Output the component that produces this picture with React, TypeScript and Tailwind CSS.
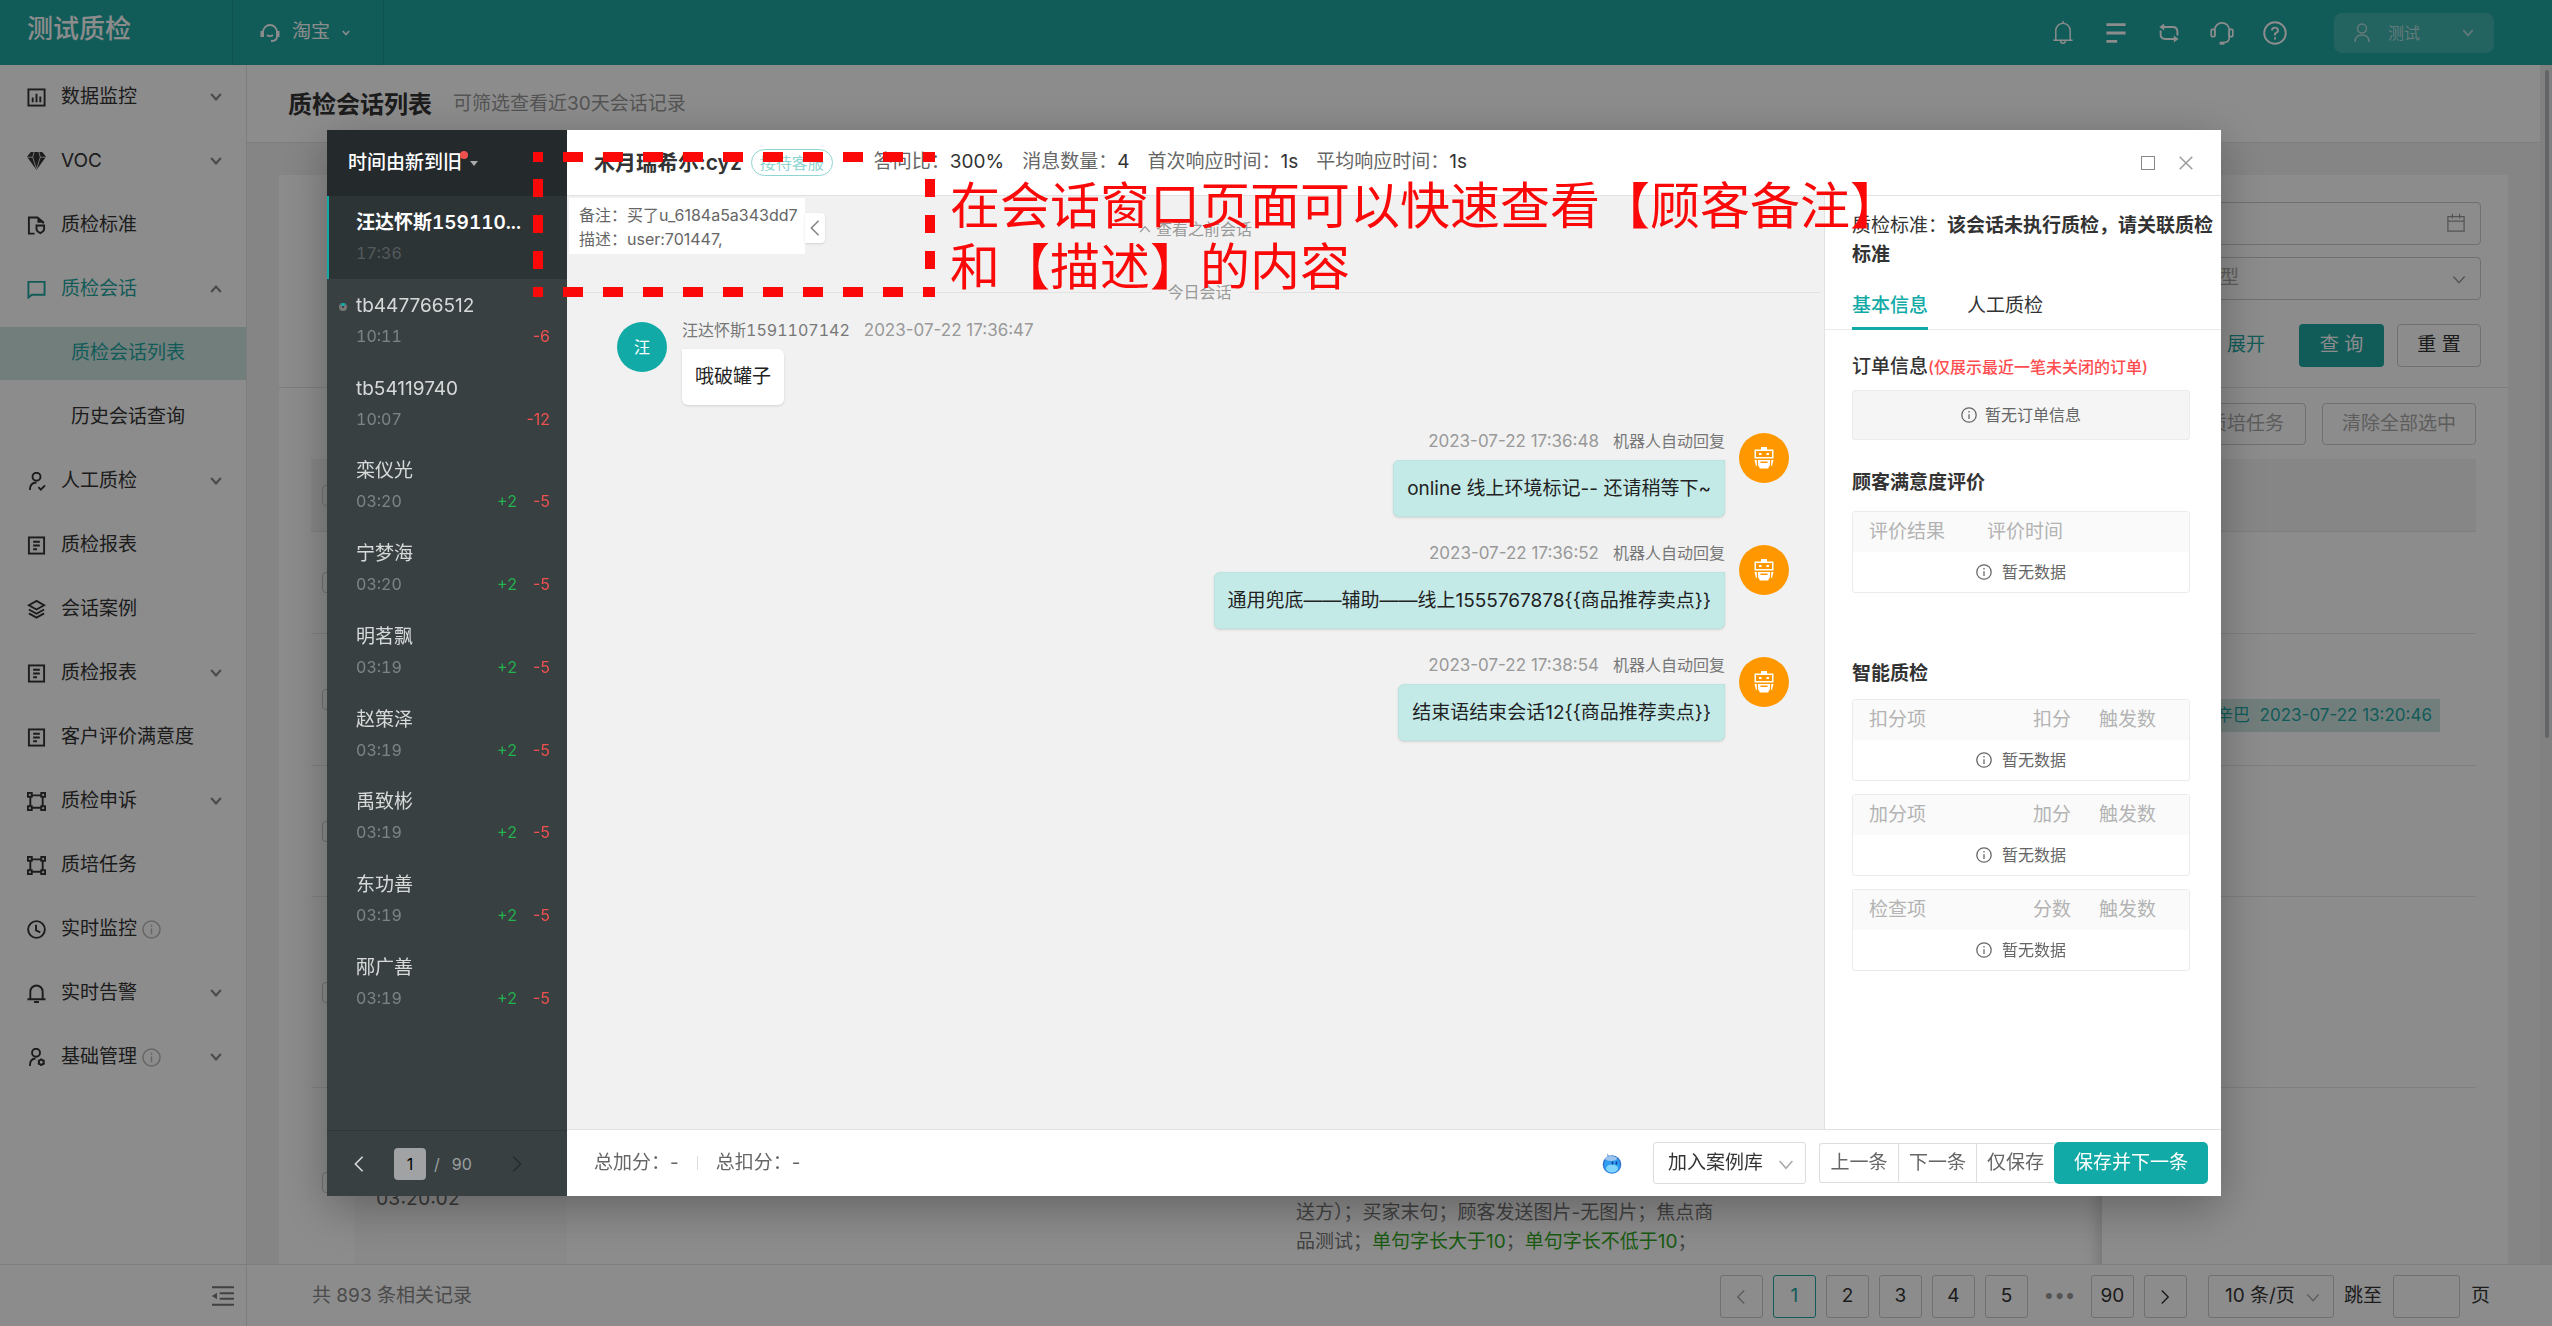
import { useState, type ReactNode } from 'react';

type IconProps = { className?: string; children: ReactNode; width?: number };

function Icon({ className = 'size-5', children, width = 1.8 }: IconProps) {
  return (
    <svg
      viewBox="0 0 20 20"
      fill="none"
      stroke="currentColor"
      strokeWidth={width}
      className={`shrink-0 ${className}`}
      aria-hidden="true"
    >
      {children}
    </svg>
  );
}

type ArrowProps = { className?: string; width?: number };

const Down = ({ className, width = 2 }: ArrowProps) => (
  <Icon className={className} width={width}><path d="M2 5l8 9 8-9" /></Icon>
);
const Up = ({ className, width = 2 }: ArrowProps) => (
  <Icon className={className} width={width}><path d="M2 15l8-9 8 9" /></Icon>
);
const Left = ({ className }: ArrowProps) => (
  <Icon className={className}><path d="M14 2L6 10l8 8" /></Icon>
);
const Right = ({ className }: ArrowProps) => (
  <Icon className={className}><path d="M6 2l8 8-8 8" /></Icon>
);
const Info = ({ className }: ArrowProps) => (
  <Icon className={className} width={1.6}>
    <circle cx="10" cy="10" r="9" />
    <path d="M10 9v6M10 5v2" />
  </Icon>
);

const report = (
  <>
    <rect x="2" y="1.5" width="16" height="17" />
    <path d="M6.5 6h7M6.5 10h7M6.5 14h4" />
  </>
);
const nodes = (
  <>
    <rect x="1" y="1" width="4" height="4" />
    <rect x="15" y="1" width="4" height="4" />
    <rect x="1" y="15" width="4" height="4" />
    <rect x="15" y="15" width="4" height="4" />
    <path d="M5 3.5h10M5 16.5h10M3.5 5v10M16.5 5v10" />
  </>
);

const menu = [
  {
    label: '数据监控',
    arrow: true,
    icon: (
      <>
        <rect x="1.5" y="1.5" width="17" height="17" />
        <path d="M6 10v5M10 6v9M14 9v6" />
      </>
    ),
  },
  {
    label: 'VOC',
    arrow: true,
    icon: (
      <>
        <path d="M4 0h12l4 5-10 14L0 5z" fill="currentColor" stroke="none" />
        <path d="M0 5.5h6L7.5 0M20 5.5h-6L12.5 0M6 5.5L10 18l4-12.5" stroke="#fff" strokeWidth="0.8" />
      </>
    ),
  },
  {
    label: '质检标准',
    icon: (
      <>
        <path d="M8 18.5H2v-17h9l6 5V8" />
        <path d="M11 1l6 6h-6z" fill="currentColor" stroke="none" />
        <path d="M10 10h8v4c0 2-2 3-4 4-2-1-4-2-4-4z" />
      </>
    ),
  },
  {
    label: '质检会话',
    arrow: true,
    open: true,
    icon: <path d="M1.5 18.5V2h17v13.5H5z" />,
    children: ['质检会话列表', '历史会话查询'],
  },
  {
    label: '人工质检',
    arrow: true,
    icon: (
      <>
        <circle cx="10" cy="5" r="4.2" />
        <path d="M3 19c0-5 2-8 7-8M12 16l2.5 2.5L19 14" />
      </>
    ),
  },
  { label: '质检报表', icon: report },
  {
    label: '会话案例',
    icon: <path d="M10 1l8 4.5-8 4.5-8-4.5zM2 10l8 4.5 8-4.5M2 14l8 4.5 8-4.5" />,
  },
  { label: '质检报表', arrow: true, icon: report },
  { label: '客户评价满意度', icon: report },
  { label: '质检申诉', arrow: true, icon: nodes },
  { label: '质培任务', icon: nodes },
  {
    label: '实时监控',
    info: true,
    icon: (
      <>
        <circle cx="10" cy="10" r="8.8" />
        <path d="M9.5 5v6l4.5 2" />
      </>
    ),
  },
  {
    label: '实时告警',
    arrow: true,
    icon: <path d="M3.5 16V8a6.5 6.500 0 0113 0v8M.5 16h19M7.5 19h5" />,
  },
  {
    label: '基础管理',
    arrow: true,
    info: true,
    icon: (
      <>
        <circle cx="9.5" cy="5" r="4.2" />
        <path d="M3 19c0-5 2-8 6-8" />
        <circle cx="15" cy="15" r="2.5" />
        <path d="M15 11v1.5M15 17.5V19M11.5 13l1.5.8M17 16.2l1.5.8M11.5 17l1.5-.8M17 13.8l1.5-.8" />
      </>
    ),
  },
];

const sessions = [
  { name: '汪达怀斯159110...', time: '17:36' },
  { name: 'tb447766512', time: '10:11', minus: '-6', busy: true },
  { name: 'tb54119740', time: '10:07', minus: '-12' },
  { name: '栾仪光', time: '03:20', plus: '+2', minus: '-5' },
  { name: '宁梦海', time: '03:20', plus: '+2', minus: '-5' },
  { name: '明茗飘', time: '03:19', plus: '+2', minus: '-5' },
  { name: '赵策泽', time: '03:19', plus: '+2', minus: '-5' },
  { name: '禹致彬', time: '03:19', plus: '+2', minus: '-5' },
  { name: '东功善', time: '03:19', plus: '+2', minus: '-5' },
  { name: '邴广善', time: '03:19', plus: '+2', minus: '-5' },
];

const replies = [
  { time: '2023-07-22 17:36:48', text: 'online 线上环境标记-- 还请稍等下~' },
  { time: '2023-07-22 17:36:52', text: '通用兜底——辅助——线上1555767878{{商品推荐卖点}}' },
  { time: '2023-07-22 17:38:54', text: '结束语结束会话12{{商品推荐卖点}}' },
];

const stats = [
  ['答问比：', '300%'],
  ['消息数量：', '4'],
  ['首次响应时间：', '1s'],
  ['平均响应时间：', '1s'],
];

const checks = [
  ['扣分项', '扣分', '触发数'],
  ['加分项', '加分', '触发数'],
  ['检查项', '分数', '触发数'],
];

function TopBar() {
  return (
    <header className="flex h-[65px] shrink-0 items-stretch bg-[#1fa7a2] text-white">
      <div className="w-[233px] border-r border-black/10 pl-[27px] pt-[9px] text-[26px] leading-10 font-medium">
        测试质检
      </div>
      <button className="flex w-[151px] items-center border-r border-black/10 pl-[27px] text-[19px]">
        <Icon className="mr-3 size-5">
          <path d="M3 14V9a7 7 0 0114 0v4c0 3-2 5-5 5h-1M7 12c2 1.5 4 1.5 6 0" />
          <path d="M2 8v6M18 8v6" strokeWidth="3" />
        </Icon>
        淘宝
        <Down className="ml-3 size-2" width={4} />
      </button>
      <nav className="ml-auto mr-[58px] flex items-center gap-[29px]">
        <button aria-label="通知">
          <Icon className="size-6" width={1.2}>
            <path d="M4 16V8a6 6 0 0112 0v8M2 16h16M10 2V0M8 16.5a2 2 0 004 0" />
          </Icon>
        </button>
        <button aria-label="列表">
          <Icon className="size-6" width={2.4}><path d="M2 3h16M2 10h16M2 17h9" /></Icon>
        </button>
        <button aria-label="切换">
          <Icon className="size-6" width={1.6}>
            <path d="M5 5h8q4 0 4 4v3M15 15H7q-4 0-4-4V8" />
            <path d="M6 2L2 5l4 3zM14 12l4 3-4 3z" fill="currentColor" stroke="none" />
          </Icon>
        </button>
        <button aria-label="客服">
          <Icon className="size-6" width={1.4}>
            <path d="M4 13V7.5a6 6 0 0112 0V14q0 4-5 4" />
            <rect x="1" y="7" width="3" height="6" rx="1" />
            <rect x="16" y="7" width="3" height="6" rx="1" />
            <path d="M8 18.5h4" strokeWidth="2.5" />
          </Icon>
        </button>
        <button aria-label="帮助">
          <Icon className="size-6" width={1.6}>
            <circle cx="10" cy="10" r="9" />
            <path d="M7.5 8q0-2.5 2.5-2.5T12.500 8q0 1.5-2.5 2.5v1.5M10 13.500v2" />
          </Icon>
        </button>
        <button className="ml-[18px] flex h-10 w-40 items-center rounded-lg bg-white/15 pl-[18px] pr-5 text-base text-white/60">
          <Icon className="mr-4 size-5" width={1.5}>
            <circle cx="10" cy="5.5" r="4.5" />
            <path d="M3 19q0-7 7-7t7 7" />
          </Icon>
          测试
          <Down className="ml-auto size-3" width={3} />
        </button>
      </nav>
    </header>
  );
}

function Sidebar() {
  return (
    <aside className="flex w-[247px] shrink-0 flex-col border-r border-[#e4e4e4] bg-white">
      <nav className="flex-1 text-[19px] leading-7 text-[#333]">
        {menu.map((item, i) => (
          <div key={i}>
            <button
              className={`flex h-16 w-full items-center pl-[27px] pr-6 ${item.open ? 'text-[#1fa7a2]' : ''}`}
            >
              <Icon className="mr-[15px] size-[19px]" width={2}>{item.icon}</Icon>
              {item.label}
              {item.info && <Info className="ml-[5px] size-[19px] text-[#bbb]" />}
              <span className="ml-auto text-[#888]">
                {item.arrow &&
                  (item.open ? <Up className="size-3" width={3.5} /> : <Down className="size-3" width={3.5} />)}
              </span>
            </button>
            {item.children?.map((child, n) => (
              <div key={child} className="flex h-16 items-center">
                <a
                  href="#"
                  className={`flex h-[53px] w-full items-center pl-[71px] ${n === 0 ? 'bg-[#d0e6e2] text-[#1fa7a2]' : ''}`}
                >
                  {child}
                </a>
              </div>
            ))}
          </div>
        ))}
      </nav>
      <div className="flex h-[62px] items-center justify-end border-t border-[#e4e4e4] pr-3">
        <button aria-label="收起" className="text-[#777]">
          <Icon className="size-[22px]">
            <path d="M0 2h20M7 7.5h13M7 12.5h13M0 18h20" />
            <path d="M4.5 7L0 10l4.5 3z" fill="currentColor" stroke="none" />
          </Icon>
        </button>
      </div>
    </aside>
  );
}

const rowCell = 'border-b border-[#e8e8e8]';

function Check() {
  return (
    <input
      type="checkbox"
      aria-label="选择"
      className="block size-[21px] appearance-none rounded-sm border border-[#ccc]"
    />
  );
}

function Records() {
  const rows = ['h-[102px]', 'h-[132px]', 'h-[131px]', 'h-[191px]'];
  return (
    <table className="w-full table-fixed border-separate border-spacing-0 text-[19px] leading-[29px] text-[#777]">
      <colgroup>
        <col className="w-[43px]" />
        <col className="w-[213px]" />
        <col className="w-[729px]" />
        <col className="w-[450px]" />
        <col />
        <col className="w-[374px]" />
      </colgroup>
      <thead>
        <tr className="h-[73px] bg-[#f5f5f5]">
          <th className={`${rowCell} pl-[11px]`}><Check /></th>
          {[1, 2, 3, 4, 5].map((c) => <th key={c} className={rowCell} />)}
        </tr>
      </thead>
      <tbody>
        {rows.map((h, i) => (
          <tr key={i} className={h}>
            <td className={`${rowCell} pl-[11px]`}><Check /></td>
            <td className={`${rowCell} bg-[#fafafa]`} />
            <td className={rowCell} />
            <td className={rowCell} />
            <td className={rowCell} />
            <td className={`${rowCell} pr-9`}>
              {i === 1 && (
                <div className="float-right mt-8 flex h-[33px] items-center bg-[#d0e6e2] px-2 text-[17px] whitespace-nowrap text-[#1fa7a2]">
                  辛巴&nbsp; 2023-07-22 13:20:46
                </div>
              )}
            </td>
          </tr>
        ))}
        <tr className="h-[188px]">
          <td className="pl-[11px]"><Check /></td>
          <td className="bg-[#fafafa] pb-[63px] pl-[22px] align-bottom text-[#666] tabular-nums">03:20:02</td>
          <td />
          <td className="pb-5 align-bottom">
            <p className="w-[440px]">
              送方）；买家末句；顾客发送图片-无图片；焦点商
              <br />
              品测试；<span className="text-[#2fa51c]">单句字长大于10</span>；
              <span className="text-[#2fa51c]">单句字长不低于10</span>；
            </p>
          </td>
          <td />
          <td className="shadow-[-6px_0_12px_rgba(0,0,0,0.14)] [clip-path:inset(0_0_0_-20px)]" />
        </tr>
      </tbody>
    </table>
  );
}

function Pager() {
  const box = 'flex h-[43px] w-[43px] items-center justify-center rounded-[3px] border border-[#ccc]';
  return (
    <footer className="flex h-[62px] shrink-0 items-center border-t border-[#e4e4e4] bg-white pl-[65px] pr-[62px] pt-[2px] text-[19px] text-[#333]">
      <span className="text-[#888]">共 893 条相关记录</span>
      <div className="ml-auto flex items-center gap-[10px]">
        <button aria-label="上一页" className={`${box} text-[#aaa]`}><Left className="size-4" /></button>
        <button className="flex h-[43px] w-[43px] items-center justify-center rounded-[3px] border border-[#1fa7a2] text-[#1fa7a2]">1</button>
        <button className={box}>2</button>
        <button className={box}>3</button>
        <button className={box}>4</button>
        <button className={box}>5</button>
        <span className="w-[43px] text-center text-[#999]">•••</span>
        <button className={box}>90</button>
        <button aria-label="下一页" className={box}><Right className="size-4" /></button>
        <div className="relative ml-[11px]">
          <select aria-label="每页条数" className="h-[43px] w-[126px] appearance-none rounded-[3px] border border-[#ccc] pl-4">
            <option>10 条/页</option>
          </select>
          <Down className="pointer-events-none absolute right-[14px] top-4 size-[14px] text-[#aaa]" />
        </div>
        <label className="flex items-center gap-[11px]">
          跳至
          <input className="h-[43px] w-[67px] rounded-[3px] border border-[#ccc]" />
          页
        </label>
      </div>
    </footer>
  );
}

function Page() {
  return (
    <main className="flex min-w-0 flex-1 flex-col">
      <div className="flex min-h-0 flex-1 overflow-hidden bg-[#f2f2f2]">
        <div className="min-w-0 flex-1">
          <div className="flex h-[78px] items-center gap-[21px] border-b border-[#e4e4e4] bg-white pl-[41px] pt-[2px]">
            <h1 className="text-2xl font-semibold text-[#333]">质检会话列表</h1>
            <span className="text-[19px] text-[#999]">可筛选查看近30天会话记录</span>
          </div>
          <section className="mx-8 mt-8 bg-white">
            <div className="flex h-[213px] flex-col items-end border-b border-[#e4e4e4] pr-[27px] pt-[27px] text-[19px]">
              <div className="relative">
                <input aria-label="会话时间" className="h-[43px] w-[500px] rounded border border-[#ccc]" />
                <Icon className="absolute right-4 top-3 size-[18px] text-[#999]" width={1.4}>
                  <path d="M1 3h18v16H1zM1 8h18M6 0v5M14 0v5" />
                </Icon>
              </div>
              <div className="relative mt-3">
                <select aria-label="类型" className="h-[43px] w-[264px] appearance-none rounded border border-[#ccc] pl-[2px] text-[#aaa]">
                  <option>型</option>
                </select>
                <Down className="pointer-events-none absolute right-[15px] top-4 size-[14px] text-[#999]" />
              </div>
              <div className="mt-6 flex items-center">
                <a href="#" className="mr-[34px] text-[#1fa7a2]">展开</a>
                <button className="h-[43px] w-[85px] rounded bg-[#1fa7a2] text-white">查 询</button>
                <button className="ml-[13px] h-[43px] w-[84px] rounded border border-[#ccc] text-[#333]">重 置</button>
              </div>
            </div>
            <div className="px-8">
              <div className="flex h-[71px] justify-end gap-4 pt-[15px] text-[19px] text-[#aaa]">
                <button className="h-[42px] w-[120px] rounded border border-[#ccc]">质培任务</button>
                <button className="h-[42px] w-[154px] rounded border border-[#ccc]">清除全部选中</button>
              </div>
              <Records />
            </div>
          </section>
        </div>
        <div className="w-3 bg-[#ececec] pl-[5px] pt-[5px]">
          <div className="h-[668px] w-1 rounded-full bg-[#b4b6ba]" />
        </div>
      </div>
      <Pager />
    </main>
  );
}

function SessionList() {
  const [selected, setSelected] = useState(0);
  return (
    <aside className="flex w-60 shrink-0 flex-col bg-[#384042] text-white">
      <button className="flex h-[66px] items-center bg-[#24292c] pl-[21px] text-[19px] font-medium">
        时间由新到旧
        <span className="-ml-[2px] mb-4 size-2 rounded-full bg-[#f0514f]" />
        <svg viewBox="0 0 8 5" className="ml-[2px] w-2 fill-[#aaa]" aria-hidden="true"><path d="M0 0h8L4 5z" /></svg>
      </button>
      <ul className="grid h-[827px] auto-rows-fr">
        {sessions.map((s, i) => (
          <li key={s.name}>
            <button
              onClick={() => setSelected(i)}
              className={`relative flex size-full flex-col justify-center border-l-2 pl-[27px] pr-[17px] pt-[2px] text-left leading-[30px] ${
                i === selected ? 'border-[#12aaa7] bg-[#2d3436]' : 'border-transparent'
              }`}
            >
              <span
                className={`text-[19px] whitespace-nowrap ${i === selected ? 'font-semibold tabular-nums' : 'text-white/80'}`}
              >
                {s.name}
              </span>
              {s.busy && (
                <span className="absolute left-[10px] top-6 size-2 rounded-full border-[3px] border-[#777] border-t-[#12aaa7]" />
              )}
              <span className="flex w-full gap-4 text-base leading-[30px]">
                <span className={`mr-auto tabular-nums ${i === selected ? 'text-white/20' : 'text-white/35'}`}>
                  {s.time}
                </span>
                <span className="text-[#23b34f]">{s.plus}</span>
                <span className="text-[#f0514f]">{s.minus}</span>
              </span>
            </button>
          </li>
        ))}
      </ul>
      <div className="mt-auto flex h-[66px] items-center border-t border-[#2f3638] pl-[23px] text-base text-white/50">
        <button aria-label="上一页" className="text-white/80"><Left className="size-[18px]" /></button>
        <input
          aria-label="页码"
          defaultValue="1"
          className="ml-[26px] mr-2 h-8 w-8 rounded-sm bg-[#a0a2a3] text-center text-black"
        />
        /<span className="ml-3">90</span>
        <button aria-label="下一页" className="ml-9 text-black/30"><Right className="size-[18px]" /></button>
      </div>
    </aside>
  );
}

function Robot() {
  return (
    <span className="mt-1 flex size-[50px] shrink-0 items-center justify-center rounded-full bg-[#ff9800]">
      <svg viewBox="0 0 20 22" className="h-[22px] w-5" fill="#fff" aria-hidden="true">
        <path d="M7 0h6v2.500h6.500v9H.5v-9H7zM2 4v6h16V4z" fillRule="evenodd" />
        <path d="M5 6h2.500v2H5zM12.500 6H15v2h-2.500zM4 13h12v5l-2 3.500H6L4 18zM6.500 14.500v1.500h7v-1.500zM.5 13h2.300v6H2zM17.200 13h2.300L18 19h-.8z" fillRule="evenodd" />
      </svg>
    </span>
  );
}

function Chat() {
  return (
    <section className="relative min-w-0 flex-1 bg-[#f1f1f1]">
      {/* customer note card, floats over the conversation */}
      <div className="absolute left-[2px] top-[2px] flex items-start text-base leading-6 text-[#666]">
        <div className="h-14 w-[236px] bg-white pl-[10px] pt-[5px] whitespace-nowrap">
          <p>备注：买了u_6184a5a343dd7</p>
          <p>描述：user:701447,</p>
        </div>
        <button aria-label="收起备注" className="mt-[15px] flex h-[30px] w-5 items-center justify-center rounded-r bg-white text-[#888] shadow-sm">
          <Left className="size-[18px]" />
        </button>
      </div>

      <div className="px-1 pt-[21px] text-base leading-6 text-[#999]">
        <button className="mx-auto flex items-center gap-[5px]">
          <Up className="size-3" />查看之前会话
        </button>
        <div className="mt-[39px] flex items-center gap-4 pl-2">
          <span className="h-px flex-1 bg-[#e2e2e2]" />
          今日会话
          <span className="h-px flex-1 bg-[#e2e2e2]" />
        </div>
      </div>

      <div className="pl-[50px] pr-[35px] pt-[14px] text-[19px] leading-7 text-[#222]">
        <div className="mb-6 flex gap-[15px]">
          <span className="mt-1 flex size-[50px] items-center justify-center rounded-full bg-[#12aaa7] text-base text-white">汪</span>
          <div>
            <p className="mb-[7px] flex gap-[14px] text-base leading-6 text-[#777]">
              <span className="tabular-nums">汪达怀斯1591107142</span>
              <time className="text-[17px] text-[#999]">2023-07-22 17:36:47</time>
            </p>
            <p className="flex h-14 w-fit items-center rounded-md rounded-tl-none bg-white px-[13px] shadow-sm">哦破罐子</p>
          </div>
        </div>
        {replies.map((r) => (
          <div key={r.time} className="mb-6 flex justify-end gap-[14px]">
            <div className="flex flex-col items-end">
              <p className="mb-[7px] flex gap-[14px] text-base leading-6 text-[#777]">
                <time className="text-[17px] text-[#999]">{r.time}</time>
                机器人自动回复
              </p>
              <p className="flex h-[57px] items-center rounded-md rounded-tr-none border border-[#b9e4e2] bg-[#c4eae8] px-[13px] whitespace-nowrap shadow-sm">
                {r.text}
              </p>
            </div>
            <Robot />
          </div>
        ))}
      </div>
    </section>
  );
}

function EmptyRow({ span }: { span: number }) {
  return (
    <tr className="h-10">
      <td colSpan={span} className="text-base text-[#666]">
        <span className="flex items-center justify-center gap-[10px]">
          <Info className="size-4" />暂无数据
        </span>
      </td>
    </tr>
  );
}

const panelTable = 'w-full table-fixed border-separate border-spacing-0 rounded-[3px] border border-[#ebebeb] text-left';

function InfoPanel() {
  return (
    <aside className="w-[397px] shrink-0 border-l border-[#e2e2e2] bg-white text-[19px] text-[#333]">
      <p className="pl-[27px] pr-1 pt-[15px] leading-[29px]">
        质检标准：<b className="font-semibold">该会话未执行质检，请关联质检标准</b>
      </p>
      <div role="tablist" className="mt-4 flex h-[45px] gap-[39px] border-b border-[#ebebeb] pl-[27px]">
        <button role="tab" aria-selected="true" className="h-[45px] border-b-[3px] border-[#12aaa7] font-medium text-[#12aaa7]">
          基本信息
        </button>
        <button role="tab" aria-selected="false" className="h-[45px] border-b-[3px] border-transparent">
          人工质检
        </button>
      </div>
      <div className="pl-[27px] pr-[31px]">
        <h3 className="mt-[22px] leading-[30px] font-medium">
          订单信息<span className="text-base text-[#ff4d4f]">(仅展示最近一笔未关闭的订单)</span>
        </h3>
        <p className="mt-2 flex h-[50px] items-center justify-center gap-2 rounded-[3px] border border-[#ebebeb] bg-[#f5f5f5] text-base text-[#666]">
          <Info className="size-4" />暂无订单信息
        </p>

        <h3 className="mt-7 leading-[30px] font-semibold">顾客满意度评价</h3>
        <table className={`${panelTable} mt-[13px]`}>
          <thead>
            <tr className="h-10 bg-[#fafafa] text-[#b3b3b3]">
              <th className="w-[134px] pl-4 font-normal">评价结果</th>
              <th className="font-normal">评价时间</th>
            </tr>
          </thead>
          <tbody><EmptyRow span={2} /></tbody>
        </table>

        <h3 className="mt-[66px] mb-[10px] leading-[30px] font-semibold">智能质检</h3>
        {checks.map((cols) => (
          <table key={cols[0]} className={`${panelTable} mb-[13px]`}>
            <thead>
              <tr className="h-10 bg-[#fafafa] text-[#b3b3b3]">
                <th className="pl-4 font-normal">{cols[0]}</th>
                <th className="w-[66px] font-normal">{cols[1]}</th>
                <th className="w-[90px] font-normal">{cols[2]}</th>
              </tr>
            </thead>
            <tbody><EmptyRow span={3} /></tbody>
          </table>
        ))}
      </div>
    </aside>
  );
}

function ModalFooter() {
  const step = 'h-10 border border-r-0 border-[#ddd] text-[#666]';
  return (
    <footer className="flex h-[67px] shrink-0 items-center border-t border-[#e2e2e2] bg-white pl-[27px] pr-[13px] text-[19px] text-[#666]">
      <span>总加分：-</span>
      <span className="mx-[18px] h-[14px] w-px bg-[#ddd]" />
      <span>总扣分：-</span>
      <svg viewBox="0 0 20 21" className="ml-auto mr-[31px] h-[21px] w-5" aria-hidden="true">
        <path d="M5 0q1 3 5 3.5L6 7z" fill="#5d8fd6" />
        <circle cx="10" cy="11.5" r="9.3" fill="#2b6fd0" />
        <circle cx="10" cy="12" r="8" fill="#2f9df0" />
        <ellipse cx="10" cy="15.5" rx="6" ry="4" fill="#7fd4fb" />
        <ellipse cx="9" cy="5.5" rx="6" ry="2.5" fill="#9cc4ee" />
        <path d="M10.5 8.5v3M14.5 8.5v3" stroke="#123f95" strokeWidth="1.6" />
      </svg>
      <div className="relative mr-[13px]">
        <select aria-label="案例库" className="h-[42px] w-[153px] appearance-none rounded-[3px] border border-[#ddd] pl-[14px] text-[#333]">
          <option>加入案例库</option>
        </select>
        <Down className="pointer-events-none absolute right-3 top-[15px] size-4 text-[#aaa]" />
      </div>
      <button className={`${step} w-[79px] rounded-l-[3px]`}>上一条</button>
      <button className={`${step} w-[78px]`}>下一条</button>
      <button className={`${step} w-[78px]`}>仅保存</button>
      <button className="h-[42px] w-[154px] rounded-[5px] bg-[#12aaa7] text-white">保存并下一条</button>
    </footer>
  );
}

function Annotation() {
  return (
    <>
      <svg className="pointer-events-none absolute left-[206px] top-[22px] h-[145px] w-[402px]" viewBox="0 0 402 145" stroke="#fb0808" strokeWidth="10" aria-hidden="true">
        <path d="M0 5h402M0 140h402" strokeDasharray="20 20" strokeDashoffset="10" />
        <path d="M5 0v145M397 0v145" strokeDasharray="18 18" strokeDashoffset="9" />
      </svg>
      <p className="pointer-events-none absolute left-[623px] top-[46px] text-[50px] leading-[61px] whitespace-nowrap text-[#fb0808]">
        在会话窗口页面可以快速查看【顾客备注】
        <br />
        和【描述】的内容
      </p>
    </>
  );
}

function SessionDialog() {
  return (
    <div className="fixed inset-0 flex justify-center bg-black/45 py-[130px] pr-1">
      <div role="dialog" aria-label="会话详情" className="relative flex w-full max-w-[1894px] rounded-[3px] shadow-[0_12px_48px_rgba(0,0,0,0.3)]">
        <SessionList />
        <div className="flex min-w-0 flex-1 flex-col">
          <header className="flex h-[66px] shrink-0 items-center border-b border-[#e2e2e2] bg-white pl-[27px] pr-7 text-[19px] text-[#666]">
            <h2 className="text-[21px] font-semibold text-[#333]">木月瑞希尔:cyz</h2>
            <span className="ml-[9px] mr-[41px] flex h-[27px] items-center rounded-full border border-[#8fd5d2] px-2 text-base text-[#8fd5d2]">
              接待客服
            </span>
            <dl className="flex gap-[18px]">
              {stats.map(([label, value]) => (
                <div key={label} className="flex">
                  <dt>{label}</dt>
                  <dd className="text-[#333]">{value}</dd>
                </div>
              ))}
            </dl>
            <button aria-label="最大化" className="ml-auto size-[14px] border border-[#888]" />
            <button aria-label="关闭" className="ml-6 text-[#999]">
              <Icon className="size-[14px]" width={2}><path d="M1 1l18 18M19 1L1 19" /></Icon>
            </button>
          </header>
          <div className="flex min-h-0 flex-1">
            <Chat />
            <InfoPanel />
          </div>
          <ModalFooter />
        </div>
        <Annotation />
      </div>
    </div>
  );
}

export default function App() {
  return (
    <div className="flex h-screen flex-col overflow-hidden bg-white font-['Inter','Noto_Sans_CJK_SC',sans-serif]">
      <TopBar />
      <div className="flex min-h-0 flex-1">
        <Sidebar />
        <Page />
      </div>
      <SessionDialog />
    </div>
  );
}
